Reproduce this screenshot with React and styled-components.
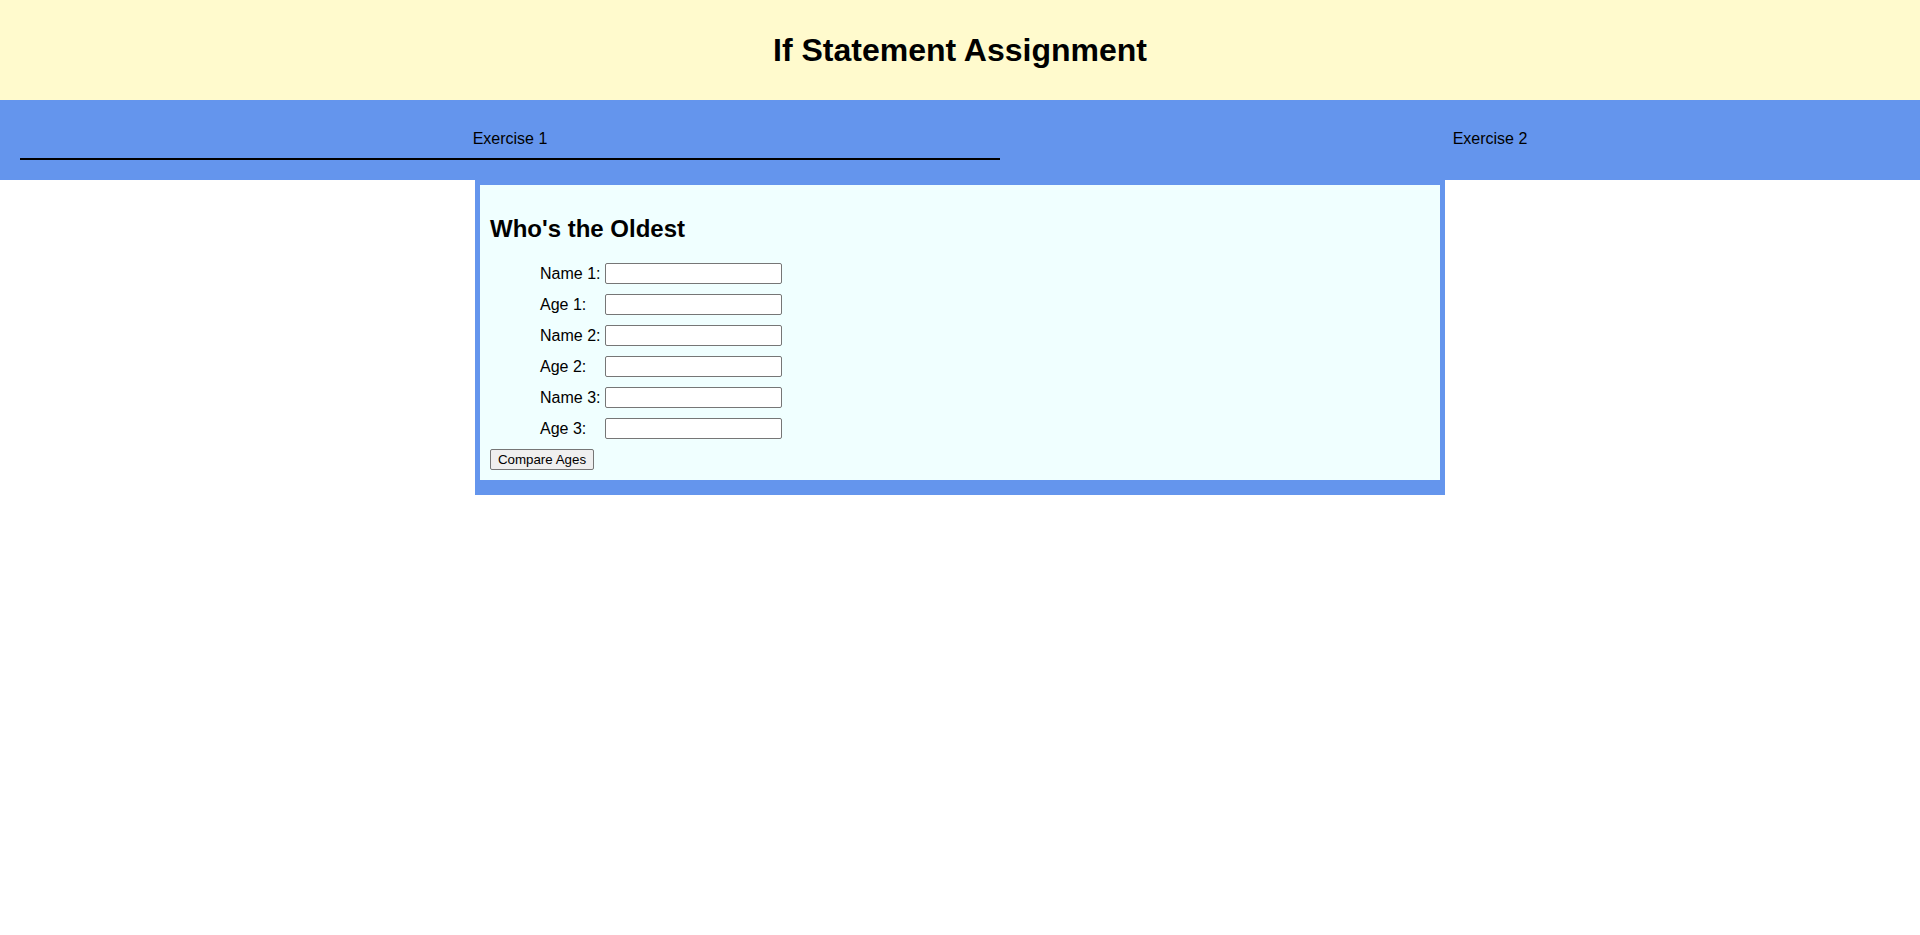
import React from 'react';
import styled, { createGlobalStyle } from 'styled-components';

const GlobalStyle = createGlobalStyle`
  body {
    margin: 0;
    background: #fff;
    font-family: "Liberation Sans", Arial, sans-serif;
    color: #000;
  }
`;

const Header = styled.header`
  height: 100px;
  background: #fffacd;
  display: flex;
  align-items: center;
  justify-content: center;

  h1 {
    margin: 0;
    font-size: 32px;
    font-weight: bold;
  }
`;

const TabBar = styled.nav`
  background: #6495ed;
  height: 80px;
  box-sizing: border-box;
  padding: 20px 0 20px 20px;
  display: grid;
  grid-template-columns: 980px 980px;
  overflow: hidden;
`;

const Tab = styled.div`
  height: 40px;
  box-sizing: border-box;
  display: flex;
  align-items: center;
  justify-content: center;
  font-size: 16px;
  border-bottom: 2px solid ${p => (p.$active ? '#000' : 'transparent')};
  cursor: pointer;
`;

const Card = styled.section`
  width: 970px;
  margin: 0 auto;
  box-sizing: border-box;
  border: 5px solid #6495ed;
  border-bottom-width: 15px;
  background: #f0ffff;
  padding: 10px;

  h2 {
    margin: 20px 0 15px;
    font-size: 24px;
    font-weight: bold;
    line-height: 28px;
  }
`;

const Form = styled.div`
  display: grid;
  grid-template-columns: 65px 177px;
  grid-auto-rows: 31px;
  padding-left: 50px;
  align-items: center;
`;

const Label = styled.label`
  font-size: 16px;
`;

const Input = styled.input`
  width: 177px;
  height: 21px;
  box-sizing: border-box;
  border: 1px solid #767676;
  border-radius: 2px;
  padding: 1px 2px;
  background: #fff;
  font: 13.33px "Liberation Sans", Arial, sans-serif;
`;

const Button = styled.button`
  display: block;
  margin-top: 5px;
  height: 21px;
  width: 104px;
  box-sizing: border-box;
  padding: 1px 6px;
  background: #efefef;
  border: 1px solid #767676;
  border-radius: 2px;
  font: 13.33px "Liberation Sans", Arial, sans-serif;
  color: #000;
`;

const fields = ['Name 1:', 'Age 1:', 'Name 2:', 'Age 2:', 'Name 3:', 'Age 3:'];

const App = () => (
  <>
    <GlobalStyle />
    <Header>
      <h1>If Statement Assignment</h1>
    </Header>
    <TabBar>
      <Tab $active>Exercise 1</Tab>
      <Tab>Exercise 2</Tab>
    </TabBar>
    <Card>
      <h2>Who's the Oldest</h2>
      <Form>
        {fields.map(f => (
          <React.Fragment key={f}>
            <Label>{f}</Label>
            <Input type="text" />
          </React.Fragment>
        ))}
      </Form>
      <Button>Compare Ages</Button>
    </Card>
  </>
);

export default App;
